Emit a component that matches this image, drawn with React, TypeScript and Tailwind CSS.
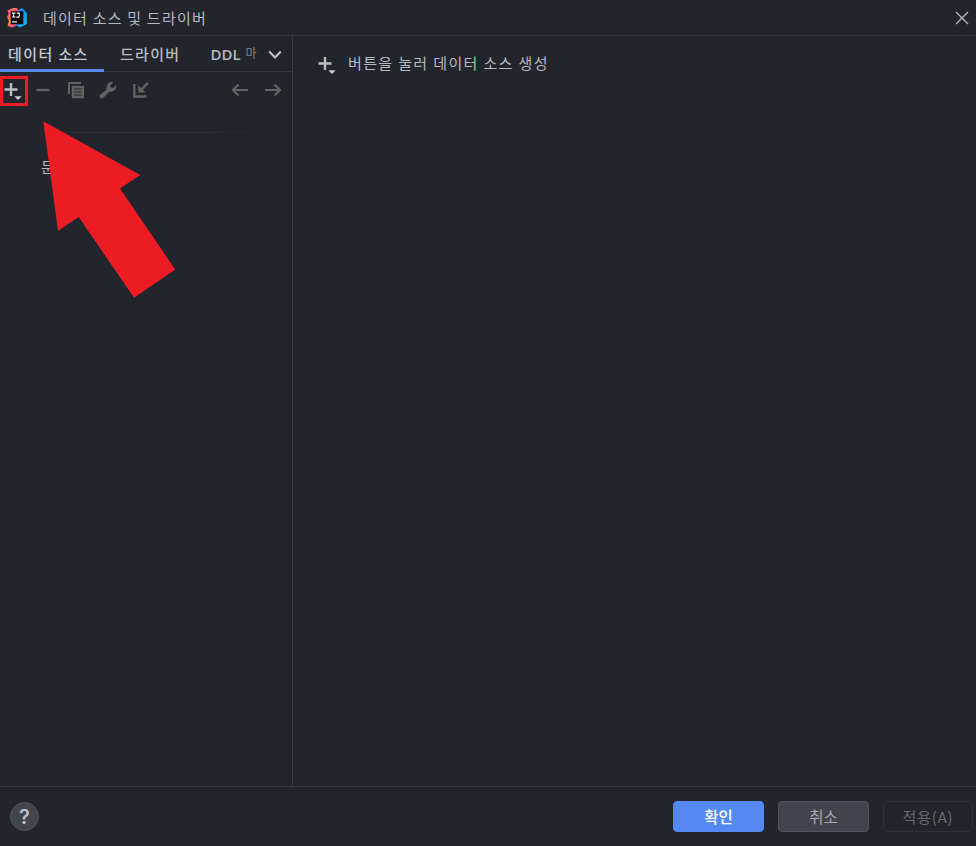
import type { ReactNode } from "react";

function Logo() {
  return (
    <svg width="22" height="22" viewBox="0 0 22 22" className="shrink-0">
      <defs>
        <linearGradient id="left" x1="0.2" y1="0" x2="0.4" y2="1">
          <stop offset="0" stopColor="#fb8c35" />
          <stop offset="0.25" stopColor="#f5508f" />
          <stop offset="0.45" stopColor="#fb6a50" />
          <stop offset="0.7" stopColor="#fda52c" />
          <stop offset="1" stopColor="#ee3aa0" />
        </linearGradient>
        <linearGradient id="right" x1="0" y1="0" x2="1" y2="1">
          <stop offset="0" stopColor="#2a7dff" />
          <stop offset="0.5" stopColor="#079ff4" />
          <stop offset="1" stopColor="#16bdf5" />
        </linearGradient>
      </defs>
      <path d="M11 4 16 1l4.800 5v11L14 20.500 9 18Z" fill="url(#right)" />
      <path d="M1.500 3.500 7 1h4l2.500 4L12 14l-2 5-4 1.500-4.500-1.500L3 14l-2-4 1.500-3Z" fill="url(#left)" />
      <path d="M4.700 4.300H17.300V17.300H4.700Z" fill="#080407" />
      <path d="M6 6.100h3.500M7.700 6v4M6 10h3.500M10.800 6.100h2.500v3l-.8 1H10.300" fill="none" stroke="#fff" strokeWidth="1.1" />
      <path d="M6 14.900h5" stroke="#fff" strokeWidth="1.2" />
    </svg>
  );
}

function PlusIcon() {
  return (
    <svg width="20" height="22" viewBox="0 0 20 22" className="shrink-0">
      <path d="M0.500 7.500h13M7 1v13" stroke="#bdbebf" strokeWidth="2.4" />
      <path d="M10.400 14.300h7.200L14 18Z" fill="#ced0d6" />
    </svg>
  );
}

function ArrowIcon({ flip = false }: { flip?: boolean }) {
  return (
    <svg width="18" height="14" viewBox="0 0 18 14" className={flip ? "-scale-x-100" : ""}>
      <path d="M17 7H2M7.500 1.500 2 7l5.500 5.500" fill="none" stroke="#626365" strokeWidth="2.1" />
    </svg>
  );
}

function Toolbar() {
  return (
    <div className="flex h-[37px] items-center pb-[2px]">
      <div className="mt-[2px] h-[30px] w-7 border-[3px] border-[#ed1c24] pl-[1px] pt-[3px]">
        <PlusIcon />
      </div>
      <svg width="14" height="4" viewBox="0 0 14 4" className="ml-2">
        <path d="M0.500 2h13" stroke="#606163" strokeWidth="2.4" />
      </svg>
      <svg width="18" height="18" viewBox="0 0 18 18" className="ml-[17px]">
        <path d="M2 13V2h12" fill="none" stroke="#606163" strokeWidth="2" />
        <path d="M4.800 4.800H17v12.500H4.800Z" fill="#606163" />
        <path d="M7 8h7.600M7 11h7.600M7 14h7.600" stroke="#22252c" strokeWidth="1.1" />
      </svg>
      <svg width="18" height="18" viewBox="0 0 18 18" className="ml-[14px]">
        <path d="M.8 14.200 7.600 8.400C6.800 4.600 9.200 1 13 .8l1.400.4-3.200 3.200.5 2.200 2.300.5 3.200-3.200c1 4.100-2.500 7.700-6.600 6.700L4.200 17.100c-2.200 1-4.400-1.100-3.400-2.900Z" fill="#606163" />
      </svg>
      <svg width="16" height="16" viewBox="0 0 16 16" className="ml-4">
        <path d="M1.300 2v12.500H13.500" fill="none" stroke="#606163" strokeWidth="2.400" />
        <path d="m15 .8-6.500 6.500" stroke="#606163" strokeWidth="2.400" />
        <path d="M5.300 3.200V10.600h7.400Z" fill="#606163" />
      </svg>
      <div className="ml-auto flex gap-[15px] pr-[10px]">
        <ArrowIcon />
        <ArrowIcon flip />
      </div>
    </div>
  );
}

function Button({ children, look }: { children: ReactNode; look: string }) {
  return (
    <button className={`flex h-[31px] items-center justify-center rounded-[4px] border ${look}`}>
      {children}
    </button>
  );
}

export default function App() {
  return (
    <div className="relative flex h-[846px] w-[976px] flex-col overflow-hidden bg-[#22252c] font-['Noto_Sans_CJK_KR','Noto_Sans',sans-serif] text-[15px] text-[#b5b9c1]">
      <header className="flex h-9 shrink-0 items-center border-b border-[#34363f] pl-1.5">
        <Logo />
        <h1 className="ml-[15px] pt-px text-[15px] tracking-[1.22px]">데이터 소스 및 드라이버</h1>
        <svg width="14" height="14" viewBox="0 0 14 14" className="ml-auto mr-[7px]">
          <path d="m1 1 12 12M13 1 1 13" stroke="#b9babc" strokeWidth="1.3" />
        </svg>
      </header>

      <div className="flex min-h-0 flex-1">
        <aside className="w-[293px] shrink-0 border-r border-[#383a42]">
          <nav className="flex h-9 border-b border-[#34363f] font-medium">
            <div className="flex h-9 w-[104px] items-center border-b-[3px] border-[#568af2] pl-2 pt-[4px] tracking-[1.4px] text-[#c4c8ce]">
              데이터 소스
            </div>
            <div className="flex items-center pl-4 pt-[2px] tracking-[1.3px]">드라이버</div>
            <div className="ml-[30px] flex items-center whitespace-nowrap pt-[2px]">
              <span className="font-['Open_Sans',sans-serif] font-semibold">DDL</span>
              <span className="ml-[5px] mt-[-3px] text-[12px] leading-[14px] text-[#6f737a]">마</span>
            </div>
            <svg width="14" height="10" viewBox="0 0 14 10" className="ml-auto mr-[10px] mt-[14px]">
              <path d="m1.200 1.500 5.800 6 5.800-6" fill="none" stroke="#c4c6ca" strokeWidth="2" />
            </svg>
          </nav>
          <Toolbar />
          <div className="mt-[23px] h-px w-[282px] bg-linear-to-r from-transparent via-[#34363b] via-50% to-transparent" />
          <div className="ml-[41px] mt-[23px] whitespace-nowrap">문</div>
        </aside>

        <main className="flex flex-1 items-start pl-[25px] pt-[20px]">
          <PlusIcon />
          <p className="ml-[10px] mt-[-4px] tracking-[1.36px]">버튼을 눌러 데이터 소스 생성</p>
        </main>
      </div>

      <footer className="flex h-[60px] shrink-0 items-center border-t border-[#383a42] pl-[10px] pr-[3px]">
        <button className="flex size-[29px] items-center justify-center rounded-full border border-[#50545b] bg-[#41454d] font-['Inter',sans-serif] text-[20px] font-semibold text-[#bdbfc3]">
          ?
        </button>
        <div className="ml-auto flex gap-[14px]">
          <Button look="w-[91px] border-[#568af2] bg-[#568af2] text-[15.5px] font-medium text-white pt-px">확인</Button>
          <Button look="w-[91px] border-[#50535b] bg-[#41444c] text-[15.5px] text-[#a5a9b0] pt-px">취소</Button>
          <Button look="w-[90px] border-[#303238] bg-transparent pt-[2px] text-[15px] tracking-[0.8px] text-[#686a6e]">적용(A)</Button>
        </div>
      </footer>

      <svg width="134" height="178" viewBox="0 0 134 178" className="absolute left-[42px] top-[120px]">
        <path d="m1.300 1.300 97 53.700-20.300 13.500 55.200 81-41.200 28.200L36.700 97 16 111Z" fill="#ed1c24" />
      </svg>
    </div>
  );
}
